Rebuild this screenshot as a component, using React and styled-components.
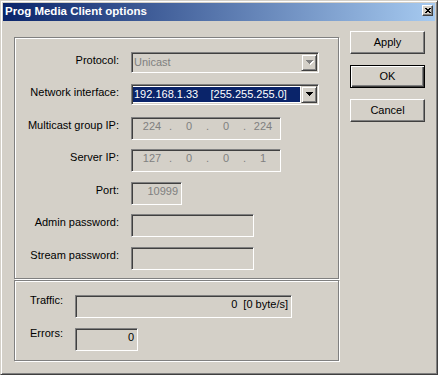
import React from 'react';
import styled, { createGlobalStyle, css } from 'styled-components';

const Global = createGlobalStyle`
  html, body { margin: 0; padding: 0; background: #d4d0c8; }
  body { font-family: "Liberation Sans", Arial, sans-serif; font-size: 11px; color: #000; }
`;

const sunken = css`
  box-sizing: border-box;
  border: 1px solid;
  border-color: #808080 #fff #fff #808080;
  box-shadow: inset 1px 1px 0 #404040, inset -1px -1px 0 #d4d0c8;
`;

const raised = css`
  box-sizing: border-box;
  border: 1px solid;
  border-color: #fff #404040 #404040 #fff;
  box-shadow: inset -1px -1px 0 #808080, inset 1px 1px 0 #d4d0c8;
`;

const Window = styled.div`
  box-sizing: border-box;
  width: 438px;
  height: 375px;
  background: #d4d0c8;
  border: 1px solid;
  border-color: #d4d0c8 #404040 #404040 #d4d0c8;
  box-shadow: inset 1px 1px 0 #fff, inset -1px -1px 0 #808080;
  padding: 2px;
  display: flex;
  flex-direction: column;
`;

const TitleBar = styled.div`
  height: 18px;
  flex: none;
  display: flex;
  align-items: flex-start;
  background: linear-gradient(to right, #0a246a, #a6caf0);
`;

const Title = styled.div`
  flex: 1;
  padding-left: 2px;
  color: #fff;
  font-weight: bold;
  font-size: 11.5px;
  line-height: 17px;
  white-space: nowrap;
`;

const CloseButton = styled.div`
  ${raised};
  width: 11px;
  height: 11px;
  margin: 2px 2px 0 0;
  background: #d4d0c8;
  display: flex;
  align-items: center;
  justify-content: center;
`;

const Main = styled.div`
  flex: 1;
  display: flex;
  align-items: flex-start;
  gap: 11px;
  padding: 10px 0 0 11px;
`;

const Groups = styled.div`
  display: flex;
  flex-direction: column;
  padding-top: 6px;
`;

const Group = styled.div`
  box-sizing: border-box;
  width: 325px;
  height: ${p => p.$h}px;
  margin-top: ${p => p.$mt || 0}px;
  border: 1px solid #808080;
  box-shadow: inset 1px 1px 0 #fff, 1px 1px 0 #fff;
  padding: 14px 0 0 ${p => p.$pl || 0}px;
  display: flex;
  flex-direction: column;
`;

const Row = styled.div`
  display: flex;
  align-items: flex-start;
  margin-top: ${p => p.$mt || 0}px;
`;

const Label = styled.div`
  width: ${p => p.$w}px;
  margin-right: ${p => p.$gap || 0}px;
  margin-top: ${p => p.$dy}px;
  text-align: ${p => p.$align || 'right'};
  line-height: 13px;
  white-space: nowrap;
`;

const ComboBox = styled.div`
  ${sunken};
  padding: 1px;
  width: 188px;
  height: 21px;
  display: flex;
  background: ${p => (p.$disabled ? '#d4d0c8' : '#fff')};
`;

const ComboValue = styled.div`
  flex: 1;
  display: flex;
  padding: 1px 1px 1px 0;
`;

const ComboText = styled.div`
  flex: 1;
  display: flex;
  align-items: center;
  padding-left: 1px;
  line-height: 13px;
  white-space: pre;
  background: ${p => (p.$selected ? '#0a246a' : 'transparent')};
  color: ${p => (p.$selected ? '#fff' : p.$disabled ? '#808080' : '#000')};
`;

const DropButton = styled.div`
  box-sizing: border-box;
  width: 16px;
  height: 17px;
  border: 1px solid;
  border-color: #d4d0c8 #404040 #404040 #d4d0c8;
  box-shadow: inset 1px 1px 0 #fff, inset -1px -1px 0 #808080;
  background: #d4d0c8;
  display: flex;
  align-items: center;
  justify-content: center;
  padding-left: 1px;
`;

const Edit = styled.div`
  ${sunken};
  width: ${p => p.$w}px;
  height: 23px;
  padding: 2px 3px 0 3px;
  background: #d4d0c8;
  color: ${p => (p.$disabled ? '#808080' : '#000')};
  text-align: right;
  line-height: 13px;
  white-space: pre;
`;

const IpEdit = styled.div`
  ${sunken};
  width: 150px;
  height: 23px;
  padding: 2px 0 0 6px;
  background: #d4d0c8;
  color: #808080;
  display: flex;
  line-height: 13px;
`;

const Octet = styled.span`
  width: 28px;
  text-align: center;
`;

const Dot = styled.span`
  width: 9px;
  text-align: center;
`;

const Buttons = styled.div`
  display: flex;
  flex-direction: column;
  gap: 11px;
`;

const Button = styled.div`
  ${raised};
  width: 75px;
  height: 23px;
  background: #d4d0c8;
  display: flex;
  align-items: center;
  justify-content: center;
  padding-bottom: 1px;
  line-height: 13px;
  ${p =>
    p.$default &&
    css`
      border-color: #000;
      box-shadow: inset 1px 1px 0 #fff, inset -1px -1px 0 #404040, inset -2px -2px 0 #808080;
    `}
`;

const Arrow = ({ disabled }) => (
  <svg width="8" height="5" viewBox="0 0 8 5" shapeRendering="crispEdges">
    {disabled && <path d="M1 1H8V2H7V3H6V4H5V5H4V4H3V3H2V2H1Z" fill="#fff" />}
    <path d="M0 0H7V1H6V2H5V3H4V4H3V3H2V2H1V1H0Z" fill={disabled ? '#808080' : '#000'} />
  </svg>
);

const CloseGlyph = () => (
  <svg width="6" height="5" viewBox="0 0 6 5" shapeRendering="crispEdges">
    <path
      d="M0 0h2v1h-2z M4 0h2v1h-2z M1 1h4v1h-4z M2 2h2v1h-2z M1 3h4v1h-4z M0 4h2v1h-2z M4 4h2v1h-2z"
      fill="#000"
    />
  </svg>
);

const Combo = ({ value, disabled, selected }) => (
  <ComboBox $disabled={disabled}>
    <ComboValue>
      <ComboText $selected={selected} $disabled={disabled}>
        {value}
      </ComboText>
    </ComboValue>
    <DropButton>
      <Arrow disabled={disabled} />
    </DropButton>
  </ComboBox>
);

const IpField = ({ parts }) => (
  <IpEdit>
    {parts.map((p, i) => (
      <React.Fragment key={i}>
        {i > 0 && <Dot>.</Dot>}
        <Octet>{p}</Octet>
      </React.Fragment>
    ))}
  </IpEdit>
);

const FormLabel = ({ children }) => (
  <Label $w={104} $gap={12} $dy={2}>
    {children}
  </Label>
);

const StatLabel = ({ children }) => (
  <Label $w={45} $align="left" $dy={-1}>
    {children}
  </Label>
);

export default function App() {
  return (
    <>
      <Global />
      <Window>
        <TitleBar>
          <Title>Prog Media Client options</Title>
          <CloseButton aria-label="Close">
            <CloseGlyph />
          </CloseButton>
        </TitleBar>
        <Main>
          <Groups>
            <Group $h={242}>
              <Row>
                <FormLabel>Protocol:</FormLabel>
                <Combo value="Unicast" disabled />
              </Row>
              <Row $mt={11}>
                <FormLabel>Network interface:</FormLabel>
                <Combo value={'192.168.1.33    [255.255.255.0]'} selected />
              </Row>
              <Row $mt={12}>
                <FormLabel>Multicast group IP:</FormLabel>
                <IpField parts={['224', '0', '0', '224']} />
              </Row>
              <Row $mt={9}>
                <FormLabel>Server IP:</FormLabel>
                <IpField parts={['127', '0', '0', '1']} />
              </Row>
              <Row $mt={10}>
                <FormLabel>Port:</FormLabel>
                <Edit $w={51} $disabled>10999</Edit>
              </Row>
              <Row $mt={9}>
                <FormLabel>Admin password:</FormLabel>
                <Edit $w={123} $disabled />
              </Row>
              <Row $mt={10}>
                <FormLabel>Stream password:</FormLabel>
                <Edit $w={123} $disabled />
              </Row>
            </Group>
            <Group $h={81} $mt={1} $pl={15}>
              <Row>
                <StatLabel>Traffic:</StatLabel>
                <Edit $w={217}>{'0  [0 byte/s]'}</Edit>
              </Row>
              <Row $mt={10}>
                <StatLabel>Errors:</StatLabel>
                <Edit $w={63}>0</Edit>
              </Row>
            </Group>
          </Groups>
          <Buttons>
            <Button>Apply</Button>
            <Button $default>OK</Button>
            <Button>Cancel</Button>
          </Buttons>
        </Main>
      </Window>
    </>
  );
}
